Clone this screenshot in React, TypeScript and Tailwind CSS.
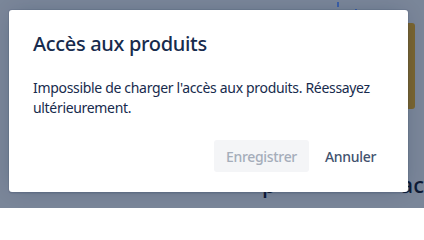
export default function App() {
  return (
    <div
      className="relative h-[208px] w-[424px] overflow-hidden bg-[#7a8699]"
      style={{ fontFamily: '"Noto Sans", "Open Sans", sans-serif' }}
    >
      {/* page behind the blanket */}
      <div className="absolute inset-0 flex flex-col">
        <div className="flex h-[23px] items-start gap-4 pl-[337px] pt-[2px]">
          <div className="h-[5px] w-[2px] bg-[#3b5fa8]" />
          <div className="mt-[7px] h-[2px] w-[2px] bg-[#3b5fa8]" />
        </div>
        <div className="ml-[300px] h-[86px] w-[115px] rounded-[3px] bg-[#7a6530]" />
        <div className="mt-[61px] flex whitespace-nowrap pl-[262px] text-[22px] font-medium leading-[28px] text-[#0d1b36]">
          <span className="w-[147px]">p</span>
          <span>ac</span>
        </div>
      </div>

      {/* dialog */}
      <div className="absolute left-[9px] top-[10px] flex h-[182px] w-[399px] flex-col rounded-[3px] bg-white tracking-[-0.02em] shadow-[0_0_0_1px_rgba(9,30,66,0.08),0_2px_1px_rgba(9,30,66,0.08),0_0_20px_-6px_rgba(9,30,66,0.31)]">
        <div className="px-6 pt-[22px] pb-[22px]">
          <h4 className="text-[20px] font-medium leading-[24px] text-[#172b4d]">
            Accès aux produits
          </h4>
        </div>
        <div className="px-6 text-[14px] leading-[20px] text-[#172b4d]">
          Impossible de charger l'accès aux produits. Réessayez ultérieurement.
        </div>
        <div className="mt-auto flex justify-end gap-1 pr-5 pb-5">
          <button
            disabled
            className="h-8 rounded-[3px] bg-[#f4f5f7] px-3 text-[14px] font-medium text-[#a5adba]"
          >
            Enregistrer
          </button>
          <button className="h-8 rounded-[3px] px-3 text-[14px] font-medium text-[#42526e]">
            Annuler
          </button>
        </div>
      </div>
    </div>
  )
}
